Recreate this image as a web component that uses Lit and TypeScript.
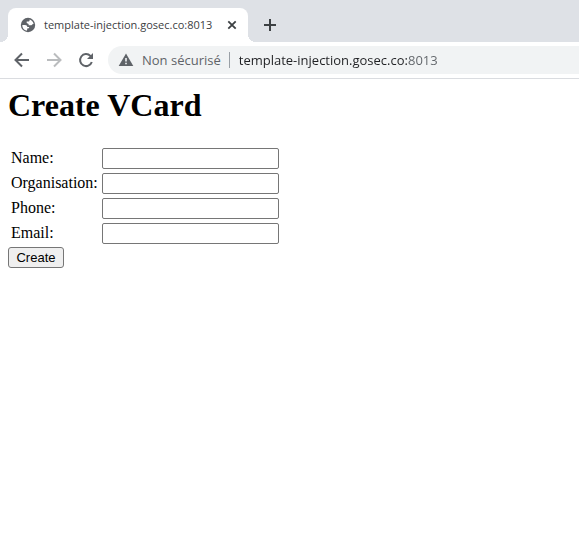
import { LitElement, html, css } from "lit";
import { customElement, property } from "lit/decorators.js";

@customElement("browser-tabs")
class BrowserTabs extends LitElement {
  @property() label = "";

  static styles = css`
    :host {
      display: flex;
      align-items: flex-end;
      height: 42px;
      padding-left: 8px;
      background: #dee1e6;
      box-sizing: border-box;
      font-family: "Open Sans", "Noto Sans", sans-serif;
    }
    .tab {
      position: relative;
      display: flex;
      align-items: center;
      width: 240px;
      height: 34px;
      padding: 0 8px 0 12px;
      box-sizing: border-box;
      background: #fff;
      border-radius: 8px 8px 0 0;
    }
    .tab::before,
    .tab::after {
      content: "";
      position: absolute;
      bottom: 0;
      width: 8px;
      height: 8px;
    }
    .tab::before {
      right: 100%;
      background: radial-gradient(circle at 0 0, #dee1e6 8px, #fff 8px);
    }
    .tab::after {
      left: 100%;
      background: radial-gradient(circle at 100% 0, #dee1e6 8px, #fff 8px);
    }
    .icon {
      flex: none;
      margin-right: 8px;
    }
    .title {
      flex: 1;
      min-width: 0;
      font-size: 11px;
      line-height: 16px;
      white-space: nowrap;
      color: #3c4043;
    }
    button {
      display: grid;
      place-items: center;
      padding: 0;
      border: 0;
      background: none;
      color: #3c4043;
    }
    .close {
      flex: none;
      width: 16px;
      height: 16px;
    }
    .add {
      width: 28px;
      height: 34px;
      margin-left: 8px;
    }
  `;

  render() {
    return html`
      <div class="tab">
        <svg class="icon" width="16" height="16" viewBox="0 0 16 16" aria-hidden="true">
          <circle cx="8" cy="8" r="7.200" fill="#5f6368" />
          <path d="M2.300 8H5c1.500 0 2.300.7 2.300 2h1.800v1.300H7.500l-.7 2.400A5.700 5.700 0 0 1 2.300 8z" fill="#fff" />
          <path d="M9.600 2.500v.8c0 .8-.6 1.300-1.400 1.300H6.700v1.500L8.600 7v1.200h2.700c.8 0 1.200-.5 1.200-1.200h1.100a5.700 5.700 0 0 0-4-4.500z" fill="#fff" />
        </svg>
        <span class="title">${this.label}</span>
        <button class="close" aria-label="Fermer">
          <svg width="16" height="16" viewBox="0 0 16 16" fill="none" stroke="currentColor" stroke-width="1.800">
            <path d="m4.300 4.300 7.400 7.400M11.700 4.300l-7.400 7.400" />
          </svg>
        </button>
      </div>
      <button class="add" aria-label="Nouvel onglet">
        <svg width="14" height="14" viewBox="0 0 14 14" fill="none" stroke="currentColor" stroke-width="2">
          <path d="M7 1v12M1 7h12" />
        </svg>
      </button>
    `;
  }
}

@customElement("browser-toolbar")
class BrowserToolbar extends LitElement {
  @property() address = "";

  static styles = css`
    :host {
      display: flex;
      align-items: center;
      height: 37px;
      padding: 0 0 0 12px;
      gap: 12px;
      box-sizing: border-box;
      border-bottom: 1px solid #dadce0;
      background: #fff;
      font-family: "Open Sans", "Noto Sans", sans-serif;
      overflow: hidden;
    }
    .nav {
      flex: none;
      width: 20px;
      height: 20px;
      padding: 0;
      border: 0;
      background: none;
      color: #5f6368;
    }
    .nav:disabled {
      color: #babcbe;
    }
    svg {
      display: block;
    }
    .omnibox {
      display: flex;
      flex: 1;
      align-items: center;
      height: 28px;
      padding-left: 10px;
      border-radius: 14px 0 0 14px;
      background: #f1f3f4;
      font-size: 13px;
      line-height: 20px;
      color: #5f6368;
    }
    .security {
      display: flex;
      align-items: center;
      gap: 8px;
      padding: 0;
      border: 0;
      background: none;
      font: inherit;
      color: inherit;
      white-space: nowrap;
    }
    .divider {
      width: 1px;
      height: 16px;
      margin: 0 9px 0 8px;
      background: #9aa0a6;
    }
    input {
      flex: 1;
      min-width: 0;
      height: 20px;
      padding: 0;
      border: 0;
      outline: 0;
      font: inherit;
      color: #202124;
      background: linear-gradient(90deg, #202124 170px, #5f6368 170px);
      background-clip: text;
      -webkit-background-clip: text;
      -webkit-text-fill-color: transparent;
    }
  `;

  render() {
    return html`
      <button class="nav" aria-label="Retour">
        <svg width="20" height="20" viewBox="0 0 20 20" fill="none" stroke="currentColor" stroke-width="2">
          <path d="M17 10H4M10 3.500 3.500 10l6.500 6.500" />
        </svg>
      </button>
      <button class="nav" aria-label="Avancer" disabled>
        <svg width="20" height="20" viewBox="0 0 20 20" fill="none" stroke="currentColor" stroke-width="2">
          <path d="M3 10h13M10 3.500 16.500 10 10 16.500" />
        </svg>
      </button>
      <button class="nav" aria-label="Actualiser">
        <svg width="20" height="20" viewBox="0 0 20 20" fill="none" stroke="currentColor" stroke-width="2">
          <path d="M15.800 12A6 6 0 1 1 14.400 5.900L16 7.500" />
          <path d="M17 3v6h-6z" fill="currentColor" stroke="none" />
        </svg>
      </button>
      <div class="omnibox">
        <button class="security">
          <svg width="16" height="16" viewBox="0 0 16 16" aria-hidden="true">
            <path d="M8 1.500 15.300 14H.7z" fill="#5f6368" />
            <path d="M7.200 6h1.600v3.600H7.200zM7.200 10.700h1.600v1.600H7.200z" fill="#f1f3f4" />
          </svg>
          Non sécurisé
        </button>
        <span class="divider"></span>
        <input aria-label="Adresse" spellcheck="false" .value=${this.address} />
      </div>
    `;
  }
}

@customElement("vcard-form")
class VCardForm extends LitElement {
  private fields = ["Name", "Organisation", "Phone", "Email"];

  static styles = css`
    :host {
      display: block;
      padding: 8px;
      font: 16px "Liberation Serif", "Times New Roman", serif;
      color: #000;
    }
    h1 {
      margin: 0 0 21px;
      font-size: 32px;
      line-height: 37px;
    }
    table {
      border-spacing: 2px;
    }
    th,
    td {
      padding: 1px;
      text-align: left;
      font-weight: normal;
      line-height: 18px;
    }
    th {
      padding-bottom: 3px;
    }
    input {
      display: block;
      width: 177px;
      height: 21px;
      padding: 1px 2px;
      box-sizing: border-box;
      border: 1px solid #767676;
      border-radius: 2px;
      background: #fff;
      font: 13px "Liberation Sans", Arial, sans-serif;
    }
    button {
      display: block;
      min-width: 56px;
      height: 21px;
      padding: 0 6px;
      border: 1px solid #767676;
      border-radius: 3px;
      background: #efefef;
      color: #000;
      font: 13px "Liberation Sans", Arial, sans-serif;
    }
  `;

  render() {
    return html`
      <h1>Create VCard</h1>
      <form @submit=${(e: Event) => e.preventDefault()}>
        <table>
          <tbody>
            ${this.fields.map((name) => {
              const id = name.toLowerCase();
              return html`<tr>
                <th scope="row"><label for=${id}>${name}:</label></th>
                <td><input id=${id} name=${id} type="text" /></td>
              </tr>`;
            })}
          </tbody>
        </table>
        <button type="submit">Create</button>
      </form>
    `;
  }
}

@customElement("app-root")
class AppRoot extends LitElement {
  static styles = css`
    :host {
      display: block;
      min-height: 100vh;
      background: #fff;
    }
  `;

  render() {
    const address = "template-injection.gosec.co:8013";
    return html`
      <browser-tabs label=${address}></browser-tabs>
      <browser-toolbar address=${address}></browser-toolbar>
      <main><vcard-form></vcard-form></main>
    `;
  }
}
